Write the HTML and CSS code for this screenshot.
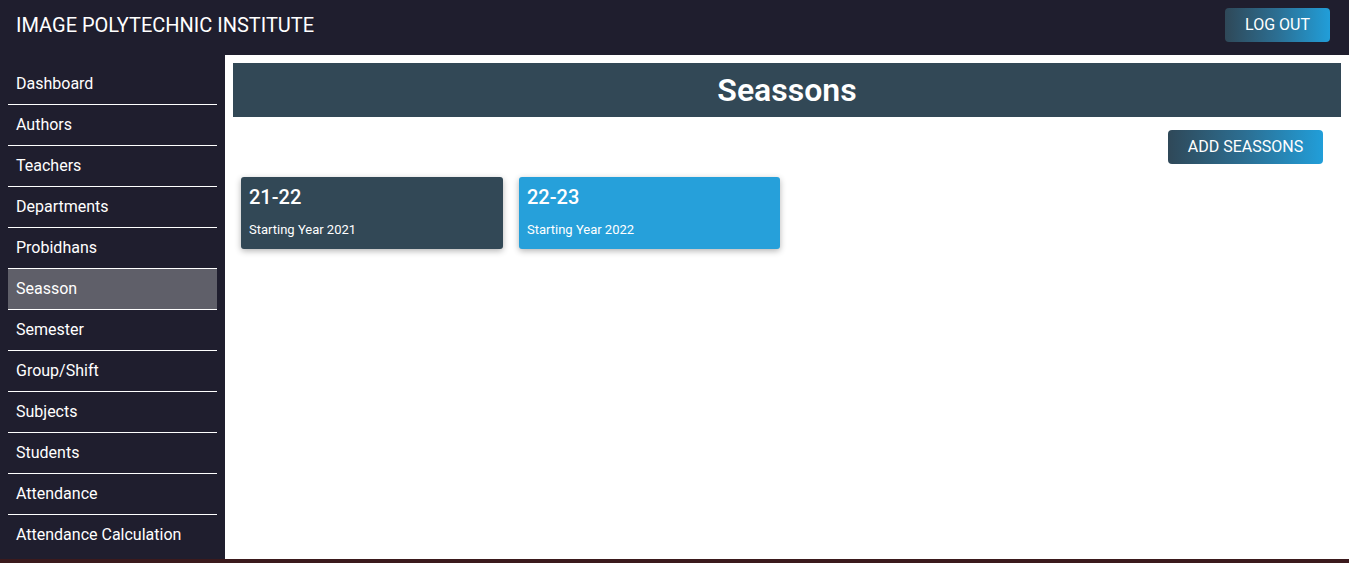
FILE: index.html
```html
<!DOCTYPE html>
<html>
<head>
<meta charset="utf-8">
<link rel="stylesheet" href="styles.css">
</head>
<body>
<div class="app">
  <header class="topbar">
    <div class="brand">IMAGE POLYTECHNIC INSTITUTE</div>
    <button class="btn-grad logout">LOG OUT</button>
  </header>
  <div class="body">
    <nav class="sidebar">
      <a class="nav-item">Dashboard</a>
      <a class="nav-item">Authors</a>
      <a class="nav-item">Teachers</a>
      <a class="nav-item">Departments</a>
      <a class="nav-item">Probidhans</a>
      <a class="nav-item active">Seasson</a>
      <a class="nav-item">Semester</a>
      <a class="nav-item">Group/Shift</a>
      <a class="nav-item">Subjects</a>
      <a class="nav-item">Students</a>
      <a class="nav-item">Attendance</a>
      <a class="nav-item last">Attendance Calculation</a>
    </nav>
    <main class="content">
      <h1 class="page-title">Seassons</h1>
      <div class="actions">
        <button class="btn-grad add">ADD SEASSONS</button>
      </div>
      <div class="cards">
        <div class="card dark">
          <div class="card-title">21-22</div>
          <div class="card-sub">Starting Year 2021</div>
        </div>
        <div class="card blue">
          <div class="card-title">22-23</div>
          <div class="card-sub">Starting Year 2022</div>
        </div>
      </div>
    </main>
  </div>
</div>
</body>
</html>
```

FILE: styles.css
```css
* { box-sizing: border-box; }
html, body { margin: 0; padding: 0; }
body {
  background: #3b1a1d;
  font-family: Roboto, "Liberation Sans", sans-serif;
  height: 563px;
  overflow: hidden;
}
.app {
  height: 559px;
  background: #1f1e2e;
  display: flex;
  flex-direction: column;
}
.topbar {
  height: 55px;
  display: flex;
  align-items: center;
  justify-content: space-between;
  padding: 0 19px 6px 16px;
}
.brand {
  color: #fff;
  font-size: 20px;
}
.btn-grad {
  border: none;
  border-radius: 4px;
  color: #fff;
  font-family: Roboto, "Liberation Sans", sans-serif;
  font-size: 16px;
  background: linear-gradient(90deg, #2f4858 0%, #2c6f93 50%, #219ed9 100%);
  cursor: pointer;
}
.logout {
  width: 105px;
  height: 34px;
}
.body {
  flex: 1;
  display: flex;
  min-height: 0;
}
.sidebar {
  width: 225px;
  padding: 9px 8px 0 8px;
  display: flex;
  flex-direction: column;
}
.nav-item {
  display: flex;
  align-items: center;
  height: 41px;
  padding-left: 8px;
  padding-bottom: 2px;
  color: #fff;
  font-size: 16px;
  border-bottom: 1px solid #ffffff;
}
.nav-item.last { border-bottom: none; }
.nav-item.active { background: #5f5f69; }
.content {
  flex: 1;
  background: #fff;
  padding: 8px;
}
.page-title {
  margin: 0;
  height: 54px;
  background: #324856;
  color: #fff;
  font-size: 32px;
  font-weight: 600;
  display: flex;
  align-items: center;
  justify-content: center;
}
.actions {
  display: flex;
  justify-content: flex-end;
  padding: 13px 18px 13px 0;
}
.add {
  width: 155px;
  height: 34px;
  padding-bottom: 2px;
}
.cards {
  display: flex;
  gap: 16px;
  padding-left: 8px;
}
.card {
  width: 262px;
  height: 72px;
  border-radius: 3px;
  color: #fff;
  padding: 8px 8px;
  box-shadow: 0 2px 6px rgba(0,0,0,0.3);
}
.card.dark { background: #324856; }
.card.blue { background: #26a0da; width: 261px; }
.card-title {
  font-size: 20px;
  font-weight: 500;
  line-height: 24px;
}
.card-sub {
  font-size: 13px;
  margin-top: 13px;
}
```
